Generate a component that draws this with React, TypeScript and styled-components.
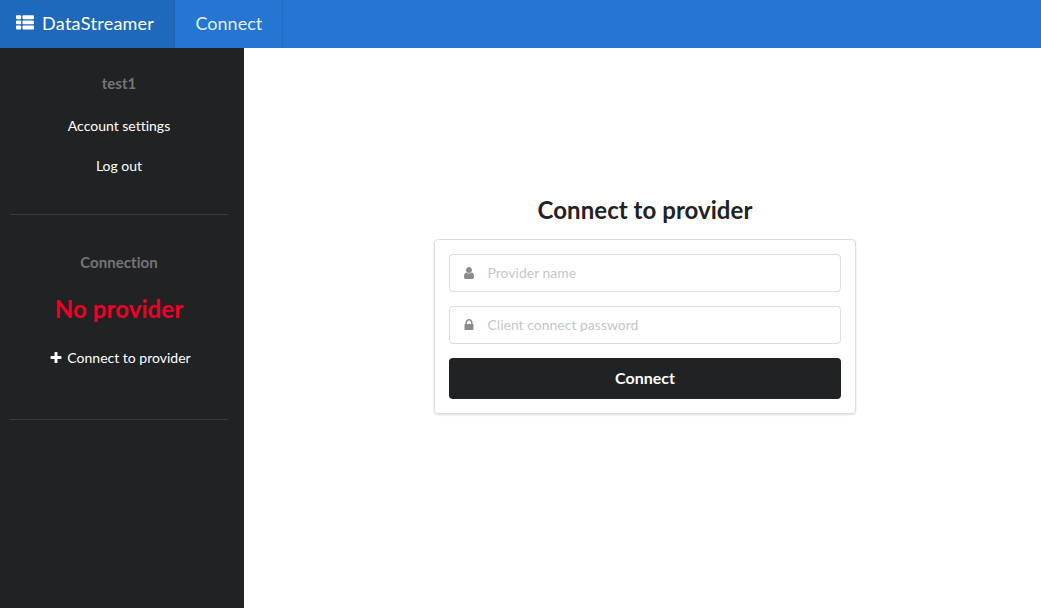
import React from 'react';
import styled, { createGlobalStyle } from 'styled-components';

const Global = createGlobalStyle`
  *, *::before, *::after { box-sizing: border-box; }
  html { font-size: 14px; }
  body { margin: 0; background: #fff; font-family: Lato, sans-serif; font-size: 14px; line-height: 1.4285em; color: rgba(0,0,0,.87); overflow: hidden; font-variant-ligatures: none; -webkit-font-smoothing: antialiased; }
  input, button { font-family: inherit; font-variant-ligatures: none; }
`;
const Page = styled.div`display: flex; flex-direction: column; height: 100vh;`;
const Menu = styled.nav`display: flex; height: 48px; background: #2576d3;`;
const MenuItem = styled.a<{ $active?: boolean; $width: number; $left: number }>`
  display: flex; align-items: center; width: ${p => p.$width}px; padding: 0 0 2px ${p => p.$left}px;
  background: ${p => (p.$active ? '#1f69bd' : 'transparent')};
  border-right: 1px solid rgba(34,36,38,.1);
  font-size: 18px; line-height: 1; white-space: nowrap;
  color: ${p => (p.$active ? '#fff' : 'rgba(255,255,255,.9)')};
  font-kerning: ${p => (p.$active ? 'none' : 'auto')};
  letter-spacing: ${p => (p.$active ? '0.15px' : 'normal')};
  svg { margin: 0 8px 1px 0; }
`;
const Body = styled.div`display: flex; flex: 1; min-height: 0;`;
const Sidebar = styled.aside`width: 244px; background: #212224; padding: 26px 16px 0 10px; text-align: center;`;
const Group = styled.section<{ $height: number }>`height: ${p => p.$height}px; margin-bottom: 38px; border-bottom: 1px solid #3a3b3d;`;
const Label = styled.h4`margin: 0; font-size: 15px; line-height: 19px; letter-spacing: 0.05px; color: #747576;`;
const SideLink = styled.a<{ $top: number }>`display: flex; justify-content: center; align-items: center; margin-top: ${p => p.$top}px; height: 20px; color: #fff; svg { margin: 0 4px 0 2px; }`;
const Status = styled.h2`margin: 22px 0 0; font-size: 24px; line-height: 30px; letter-spacing: 0.08px; color: #f00024;`;
const Main = styled.main`flex: 1; display: flex; flex-direction: column; align-items: center; padding: 147px 0 0 5px;`;
const Title = styled.h2`margin: 0 0 14px; font-size: 24px; line-height: 30px; letter-spacing: 0.05px; color: #212224;`;
const Form = styled.form`width: 422px; padding: 14px; border: 1px solid rgba(34,36,38,.15); border-radius: 4px; box-shadow: 0 1px 2px 0 rgba(34,36,38,.15);`;
const Field = styled.label`display: flex; align-items: center; height: 38px; margin-bottom: 14px; border: 1px solid rgba(34,36,38,.15); border-radius: 4px; color: #8b8b8b;
  svg { margin: 0 11.5px 0 12px; flex: none; }`;
const Input = styled.input`flex: 1; border: 0; outline: 0; padding: 0 0 2px; background: transparent; font-size: 14px; &::placeholder { color: #c7c7c7; }`;
const Submit = styled.button`display: block; width: 100%; height: 41px; border: 0; border-radius: 4px; background: #212224; color: #fff; font-size: 16px; font-weight: 700; padding: 0 0 2px;`;

const ListIcon = () => (
  <svg width="18" height="18" viewBox="0 0 1792 1792" fill="currentColor">
    <path d="M512 1248v192q0 40-28 68t-68 28H96q-40 0-68-28t-28-68v-192q0-40 28-68t68-28h320q40 0 68 28t28 68zm0-512v192q0 40-28 68t-68 28H96q-40 0-68-28T0 928V736q0-40 28-68t68-28h320q40 0 68 28t28 68zm1280 512v192q0 40-28 68t-68 28H736q-40 0-68-28t-28-68v-192q0-40 28-68t68-28h960q40 0 68 28t28 68zM512 224v192q0 40-28 68t-68 28H96q-40 0-68-28T0 416V224q0-40 28-68t68-28h320q40 0 68 28t28 68zm1280 512v192q0 40-28 68t-68 28H736q-40 0-68-28t-28-68V736q0-40 28-68t68-28h960q40 0 68 28t28 68zm0-512v192q0 40-28 68t-68 28H736q-40 0-68-28t-28-68V224q0-40 28-68t68-28h960q40 0 68 28t28 68z" />
  </svg>
);
const UserIcon = () => (
  <svg width="14" height="14" viewBox="0 0 1792 1792" fill="currentColor">
    <path d="M1536 1399q0 109-62.500 187t-150.500 78H469q-88 0-150.500-78T256 1399q0-85 8.500-160.500t31.500-152 58.500-131 94-89T583 832q131 128 313 128t313-128q76 0 134.500 34.500t94 89 58.500 131 31.500 152 8.500 160.500zm-256-887q0 159-112.500 271.500T896 896 624.500 783.500 512 512t112.500-271.500T896 128t271.500 112.500T1280 512z" />
  </svg>
);
const LockIcon = () => (
  <svg width="14" height="14" viewBox="0 0 1792 1792" fill="currentColor">
    <path d="M640 768h512V576q0-106-75-181t-181-75-181 75-75 181v192zm832 96v576q0 40-28 68t-68 28H416q-40 0-68-28t-28-68V864q0-40 28-68t68-28h32V576q0-184 132-316t316-132 316 132 132 316v192h32q40 0 68 28t28 68z" />
  </svg>
);
const PlusIcon = () => (
  <svg width="14" height="14" viewBox="0 0 1792 1792" fill="currentColor">
    <path d="M1600 736v192q0 40-28 68t-68 28h-416v416q0 40-28 68t-68 28H800q-40 0-68-28t-28-68v-416H288q-40 0-68-28t-28-68V736q0-40 28-68t68-28h416V224q0-40 28-68t68-28h192q40 0 68 28t28 68v416h416q40 0 68 28t28 68z" />
  </svg>
);

export default function App() {
  return (
    <Page>
      <Global />
      <Menu>
        <MenuItem $active $width={175} $left={16}><ListIcon />DataStreamer</MenuItem>
        <MenuItem $width={108} $left={20.5}>Connect</MenuItem>
      </Menu>
      <Body>
        <Sidebar>
          <Group $height={141}>
            <Label>test1</Label>
            <SideLink $top={23}>Account settings</SideLink>
            <SideLink $top={20}>Log out</SideLink>
          </Group>
          <Group $height={167}>
            <Label>Connection</Label>
            <Status>No provider</Status>
            <SideLink $top={24}><PlusIcon />Connect to provider</SideLink>
          </Group>
        </Sidebar>
        <Main>
          <Title>Connect to provider</Title>
          <Form>
            <Field><UserIcon /><Input placeholder="Provider name" /></Field>
            <Field><LockIcon /><Input type="password" placeholder="Client connect password" /></Field>
            <Submit type="button">Connect</Submit>
          </Form>
        </Main>
      </Body>
    </Page>
  );
}
